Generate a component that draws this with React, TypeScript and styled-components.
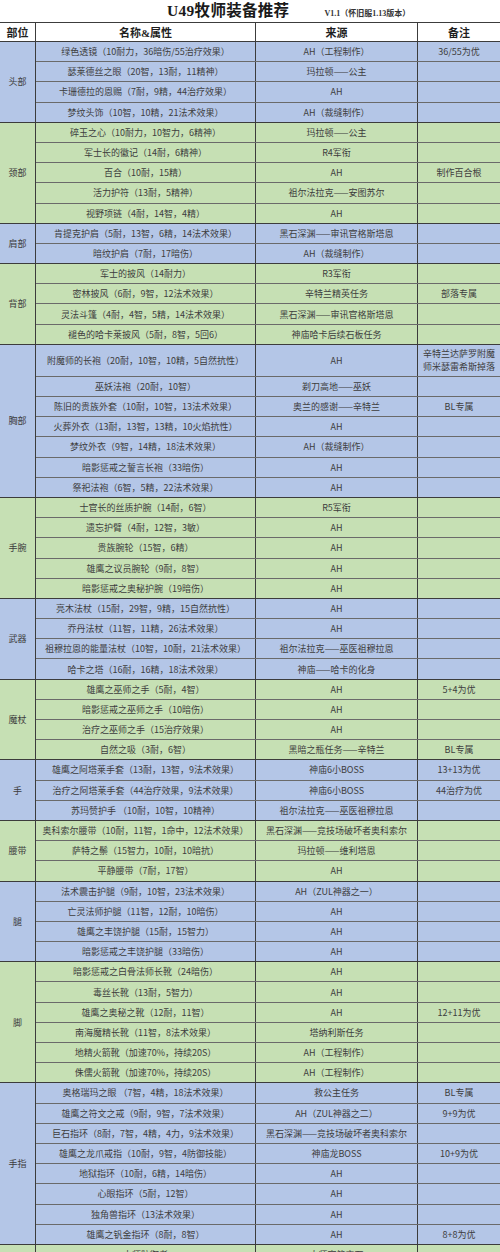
import styled, { createGlobalStyle } from 'styled-components';

type Item = [string, string, string?];

interface Group {
    part: string;
    tone: 'blue' | 'green';
    rows: Item[];
    tall?: number;
}

const BLUE = '#b4c6e7';
const GREEN = '#c6e0b4';
const ROW_H = 20.2;

const groups: Group[] = [
    {
        part: '头部', tone: 'blue', rows: [
            ['绿色透镜（10耐力，36暗伤/55治疗效果）', 'AH（工程制作）', '36/55为优'],
            ['瑟莱德丝之眼（20智，13耐，11精神）', '玛拉顿——公主'],
            ['卡珊德拉的恩赐（7耐，9精，44治疗效果）', 'AH'],
            ['梦纹头饰（10智，10精，21法术效果）', 'AH（裁缝制作）'],
        ]
    },
    {
        part: '颈部', tone: 'green', rows: [
            ['碎玉之心（10耐力，10智力，6精神）', '玛拉顿——公主'],
            ['军士长的徽记（14耐，6精神）', 'R4军衔'],
            ['百合（10耐，15精）', 'AH', '制作百合根'],
            ['活力护符（13耐，5精神）', '祖尔法拉克——安图苏尔'],
            ['视野项链（4耐，14智，4精）', 'AH'],
        ]
    },
    {
        part: '肩部', tone: 'blue', rows: [
            ['肯提克护肩（5耐，13智，6精，14法术效果）', '黑石深渊——审讯官格斯塔恩'],
            ['暗纹护肩（7耐，17暗伤）', 'AH（裁缝制作）'],
        ]
    },
    {
        part: '背部', tone: 'green', rows: [
            ['军士的披风（14耐力）', 'R3军衔'],
            ['密林披风（6耐，9智，12法术效果）', '辛特兰精英任务', '部落专属'],
            ['灵法斗篷（4耐，4智，5精，14法术效果）', '黑石深渊——审讯官格斯塔恩'],
            ['褪色的哈卡莱披风（5耐，8智，5回6）', '神庙哈卡后续石板任务'],
        ]
    },
    {
        part: '胸部', tone: 'blue', tall: 0, rows: [
            ['附魔师的长袍（20耐，10智，10精，5自然抗性）', 'AH', '辛特兰达萨罗附魔师米瑟雷希斯掉落'],
            ['巫妖法袍（20耐，10智）', '剃刀高地——巫妖'],
            ['陈旧的贵族外套（10耐，10智，13法术效果）', '奥兰的感谢——辛特兰', 'BL专属'],
            ['火葬外衣（13耐，13智，13精，10火焰抗性）', 'AH'],
            ['梦纹外衣（9智，14精，18法术效果）', 'AH（裁缝制作）'],
            ['暗影惩戒之誓言长袍（33暗伤）', 'AH'],
            ['祭祀法袍（6智，5精，22法术效果）', 'AH'],
        ]
    },
    {
        part: '手腕', tone: 'green', rows: [
            ['士官长的丝质护腕（14耐，6智）', 'R5军衔'],
            ['遗忘护臂（4耐，12智，3敏）', 'AH'],
            ['贵族腕轮（15智，6精）', 'AH'],
            ['雄鹰之议员腕轮（9耐，8智）', 'AH'],
            ['暗影惩戒之奥秘护腕（19暗伤）', 'AH'],
        ]
    },
    {
        part: '武器', tone: 'blue', rows: [
            ['亮木法杖（15耐，29智，9精，15自然抗性）', 'AH'],
            ['乔丹法杖（11智，11精，26法术效果）', 'AH'],
            ['祖穆拉恩的能量法杖（10智，10耐，21法术效果）', '祖尔法拉克——巫医祖穆拉恩'],
            ['哈卡之塔（16耐，16精，18法术效果）', '神庙——哈卡的化身'],
        ]
    },
    {
        part: '魔杖', tone: 'green', rows: [
            ['雄鹰之巫师之手（5耐，4智）', 'AH', '5+4为优'],
            ['暗影惩戒之巫师之手（10暗伤）', 'AH'],
            ['治疗之巫师之手（15治疗效果）', 'AH'],
            ['自然之吸（3耐，6智）', '黑暗之瓶任务——辛特兰', 'BL专属'],
        ]
    },
    {
        part: '手', tone: 'blue', rows: [
            ['雄鹰之阿塔莱手套（13耐，13智，9法术效果）', '神庙6小BOSS', '13+13为优'],
            ['治疗之阿塔莱手套（44治疗效果，9法术效果）', '神庙6小BOSS', '44治疗为优'],
            ['苏玛赞护手 （10耐，10智，10精神）', '祖尔法拉克——巫医祖穆拉恩'],
        ]
    },
    {
        part: '腰带', tone: 'green', rows: [
            ['奥科索尔腰带（10耐，11智，1命中，12法术效果）', '黑石深渊——竞技场破坏者奥科索尔'],
            ['萨特之鬃（15智力，10耐，10暗抗）', '玛拉顿——维利塔恩'],
            ['平静腰带（7耐，17智）', 'AH'],
        ]
    },
    {
        part: '腿', tone: 'blue', rows: [
            ['法术震击护腿（9耐，10智，23法术效果）', 'AH（ZUL神器之一）'],
            ['亡灵法师护腿（11智，12耐，10暗伤）', 'AH'],
            ['雄鹰之丰饶护腿（15耐，15智力）', 'AH'],
            ['暗影惩戒之丰饶护腿（33暗伤）', 'AH'],
        ]
    },
    {
        part: '脚', tone: 'green', rows: [
            ['暗影惩戒之白骨法师长靴（24暗伤）', 'AH'],
            ['毒丝长靴（13耐，5智力）', 'AH'],
            ['雄鹰之奥秘之靴（12耐，11智）', 'AH', '12+11为优'],
            ['南海魔精长靴（11智，8法术效果）', '塔纳利斯任务'],
            ['地精火箭靴（加速70%，持续20S）', 'AH（工程制作）'],
            ['侏儒火箭靴（加速70%，持续20S）', 'AH（工程制作）'],
        ]
    },
    {
        part: '手指', tone: 'blue', rows: [
            ['奥格瑞玛之眼 （7智，4精，18法术效果）', '救公主任务', 'BL专属'],
            ['雄鹰之符文之戒（9耐，9智，7法术效果）', 'AH（ZUL神器之二）', '9+9为优'],
            ['巨石指环（8耐，7智，4精，4力，9法术效果）', '黑石深渊——竞技场破坏者奥科索尔'],
            ['雄鹰之龙爪戒指（10耐，9智，4防御技能）', '神庙龙BOSS', '10+9为优'],
            ['地狱指环（10耐，6精，14暗伤）', 'AH'],
            ['心眼指环（5耐，12智）', 'AH'],
            ['独角兽指环（13法术效果）', 'AH'],
            ['雄鹰之钒金指环（8耐，8智）', 'AH', '8+8为优'],
        ]
    },
    {
        part: '', tone: 'green', rows: [
            ['大师防御者', '大师牢笼宝石'],
        ]
    },
];

const GlobalStyle = createGlobalStyle`
    html, body {
        margin: 0;
        padding: 0;
        background: #ffffff;
    }
    body {
        width: 500px;
        height: 1252px;
        overflow: hidden;
        font-family: "Noto Sans CJK SC", "Noto Sans", sans-serif;
    }
`;

const Sheet = styled.div`
    width: 500px;
    display: flex;
    flex-direction: column;
`;

const TitleBar = styled.div`
    height: 22px;
    box-sizing: border-box;
    display: flex;
    align-items: flex-end;
    padding: 0 0 3px 167px;
    gap: 35px;
    font-family: "Liberation Serif", "Noto Sans CJK SC", serif;
    color: #1a1a1a;
`;

const Title = styled.span`
    font-size: 15.5px;
    font-weight: 700;
    line-height: 17px;
    letter-spacing: 0.3px;
`;

const Version = styled.span`
    font-size: 8px;
    font-weight: 700;
    line-height: 10px;
    color: #333;
`;

const HeadRow = styled.div`
    display: grid;
    grid-template-columns: 36px 220px 162px 82px;
    height: 20px;
    box-sizing: border-box;
    border-top: 1px solid #3c3c3c;
    border-bottom: 1px solid #3c3c3c;
    background: #ffffff;
`;

const HeadCell = styled.div<{ $last?: boolean }>`
    display: flex;
    align-items: center;
    justify-content: center;
    border-right: ${p => (p.$last ? 'none' : '1px solid #3c3c3c')};
    font-family: "Liberation Serif", "Noto Sans CJK SC", serif;
    font-size: 11px;
    font-weight: 700;
    color: #1f1f1f;
`;

const GroupBox = styled.div<{ $tone: 'blue' | 'green' }>`
    display: flex;
    background: ${p => (p.$tone === 'blue' ? BLUE : GREEN)};
`;

const PartCell = styled.div`
    width: 36px;
    flex: none;
    box-sizing: border-box;
    display: flex;
    align-items: center;
    justify-content: center;
    border-right: 1px solid #3c3c3c;
    border-bottom: 1px solid #3c3c3c;
    font-size: 9px;
    color: #3d3d3d;
`;

const RowList = styled.div`
    flex: 1;
    display: flex;
    flex-direction: column;
`;

const Row = styled.div<{ $h: number }>`
    display: grid;
    grid-template-columns: 220px 162px 82px;
    height: ${p => p.$h}px;
    box-sizing: border-box;
    border-bottom: 1px solid #6a6a6a;
    &:last-child {
        border-bottom-color: #3c3c3c;
    }
`;

const Cell = styled.div<{ $last?: boolean }>`
    display: flex;
    align-items: center;
    justify-content: center;
    text-align: center;
    padding: 0 4px;
    border-right: ${p => (p.$last ? 'none' : '1px solid #3c3c3c')};
    font-size: 9px;
    line-height: 13px;
    color: #3d3d3d;
    white-space: pre-wrap;
    overflow: hidden;
`;

function App() {
    return (
        <>
            <GlobalStyle />
            <Sheet>
                <TitleBar>
                    <Title>U49牧师装备推荐</Title>
                    <Version>V1.1（怀旧服1.13版本）</Version>
                </TitleBar>
                <HeadRow>
                    <HeadCell>部位</HeadCell>
                    <HeadCell>名称&amp;属性</HeadCell>
                    <HeadCell>来源</HeadCell>
                    <HeadCell $last>备注</HeadCell>
                </HeadRow>
                {groups.map((group, gi) => (
                    <GroupBox key={gi} $tone={group.tone}>
                        <PartCell>{group.part}</PartCell>
                        <RowList>
                            {group.rows.map((item, index) => (
                                <Row key={index} $h={group.tall === index ? 32 : ROW_H}>
                                    <Cell>{item[0]}</Cell>
                                    <Cell>{item[1]}</Cell>
                                    <Cell $last>{item[2] ?? ''}</Cell>
                                </Row>
                            ))}
                        </RowList>
                    </GroupBox>
                ))}
            </Sheet>
        </>
    );
}

export default App;
